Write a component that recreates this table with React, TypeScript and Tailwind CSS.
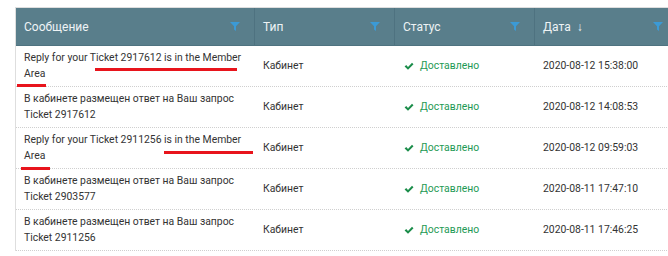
import React from 'react';

type Row = {
  msg: string[];
  type: string;
  date: string;
  marks?: { left: number; top: number; width: number }[];
};

const rows: Row[] = [
  {
    msg: ['Reply for your Ticket 2917612 is in the Member', 'Area'],
    type: 'Кабинет',
    date: '2020-08-12 15:38:00',
    marks: [
      { left: 79, top: 22, width: 142 },
      { left: 1, top: 38, width: 29 },
    ],
  },
  {
    msg: ['В кабинете размещен ответ на Ваш запрос', 'Ticket 2917612'],
    type: 'Кабинет',
    date: '2020-08-12 14:08:53',
  },
  {
    msg: ['Reply for your Ticket 2911256 is in the Member', 'Area'],
    type: 'Кабинет',
    date: '2020-08-12 09:59:03',
    marks: [
      { left: 148, top: 23, width: 89 },
      { left: 5, top: 39, width: 29 },
    ],
  },
  {
    msg: ['В кабинете размещен ответ на Ваш запрос', 'Ticket 2903577'],
    type: 'Кабинет',
    date: '2020-08-11 17:47:10',
  },
  {
    msg: ['В кабинете размещен ответ на Ваш запрос', 'Ticket 2911256'],
    type: 'Кабинет',
    date: '2020-08-11 17:46:25',
  },
];

const Funnel = () => (
  <svg width="10" height="9" viewBox="0 0 10 9" className="shrink-0">
    <path d="M0 0h10L6 4.2V9L4 7.6V4.2z" fill="#3b9ad6" />
  </svg>
);

const Check = () => (
  <svg width="10" height="9" viewBox="0 0 10 9" className="shrink-0">
    <path d="M0.6 4.6l1.6-1.5L4 4.9 8 0.8l1.5 1.4L4 7.8z" fill="#1b8d4a" />
  </svg>
);

const cols = 'grid grid-cols-[239px_140px_140px_142px]';

export default function App() {
  return (
    <div className="w-[668px] h-[256px] overflow-hidden bg-white font-['Roboto','Liberation_Sans',sans-serif]">
      <div className="pt-[7px] pl-[15px]">
        <div className="w-[662px] border-t border-l border-[#dedede]">
          {/* шапка таблицы */}
          <div className={`${cols} h-[38px] bg-[#597e8b] border-b border-[#4f7380] text-[12px] text-[#eef3f5]`}>
            {['Сообщение', 'Тип', 'Статус', 'Дата'].map((h, i) => (
              <div key={h} className={`flex items-center justify-between pl-[8px] pr-[14px] ${i < 3 ? 'border-r border-[#4e7280]' : ''}`}>
                <span className="flex items-center gap-[6px]">
                  {h}
                  {h === 'Дата' && <span className="text-[12px] font-bold leading-none">↓</span>}
                </span>
                <Funnel />
              </div>
            ))}
          </div>

          {/* строки */}
          {rows.map((r, idx) => (
            <div key={idx} className={`${cols} h-[41px] border-b border-dotted border-[#cfcfcf] text-[10.4px] text-[#333]`}>
              <div className="relative flex flex-col justify-center pl-[8px] leading-[16px]">
                {r.msg.map((l) => (
                  <span key={l}>{l}</span>
                ))}
                {r.marks?.map((m, i) => (
                  <span
                    key={i}
                    className="absolute h-[3px] bg-[#e8141c]"
                    style={{ left: m.left, top: m.top, width: m.width }}
                  />
                ))}
              </div>
              <div className="flex items-center pl-[8px]">{r.type}</div>
              <div className="flex items-center gap-[6px] pl-[9px] text-[#1e9a55]">
                <Check />
                Доставлено
              </div>
              <div className="flex items-center pl-[8px]">{r.date}</div>
            </div>
          ))}
        </div>
      </div>
    </div>
  );
}
